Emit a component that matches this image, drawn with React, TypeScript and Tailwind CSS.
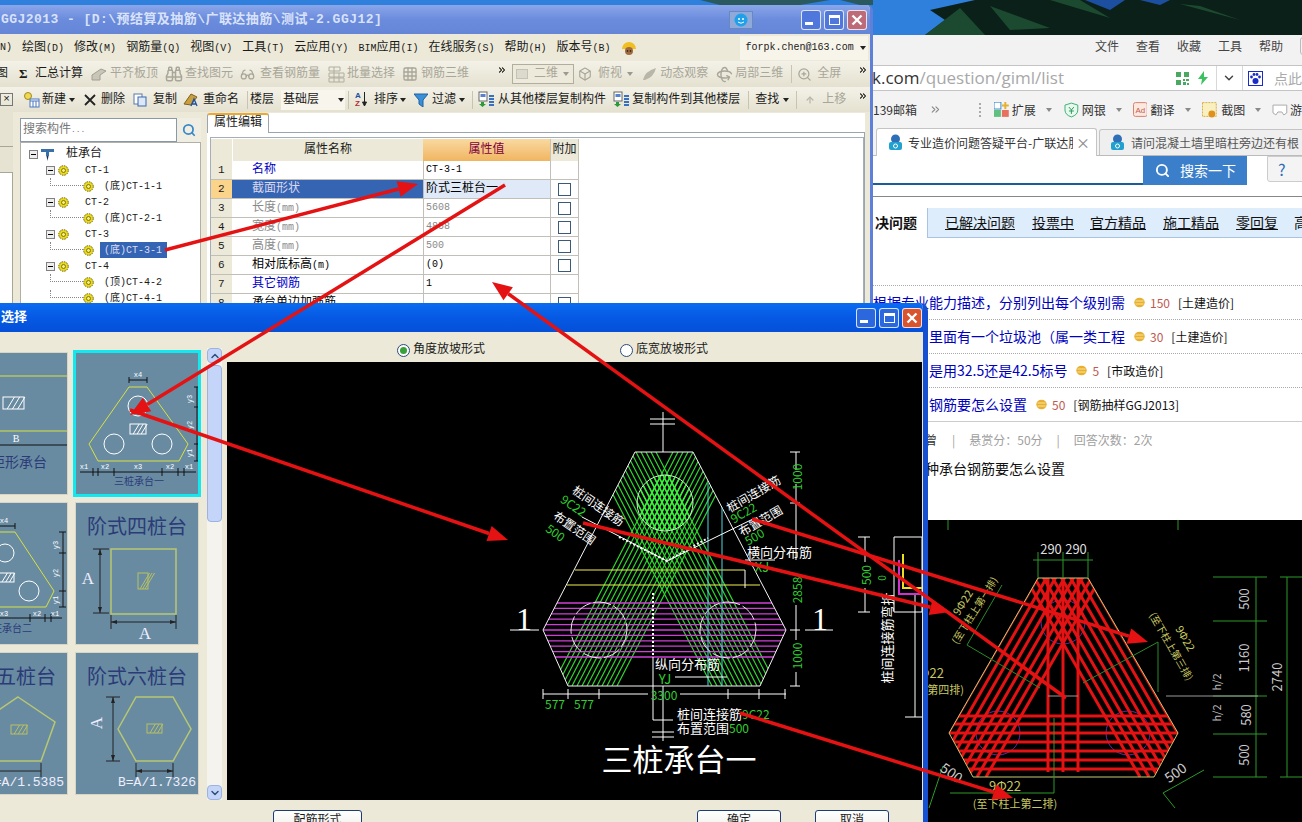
import { ReactNode } from "react";
import { ChevronDown, ChevronUp, Search, Binoculars, Glasses, Grid3x3, Box, Rotate3d, ZoomIn, ArrowUp, ChevronsRight } from "lucide-react";

const GREEN = "#2fd02f";
const CJK = "'Noto Sans CJK SC', sans-serif";

//-- Small bits shared by the toolbars
function Caret({ className = "" }: { className?: string }) {
  return (
    <svg width="6" height="4" viewBox="0 0 6 4" className={`shrink-0 ${className}`}>
      <path d="M0 0h6L3 4z" fill="#222" />
    </svg>
  );
}

function Sep({ className = "" }: { className?: string }) {
  return <span className={`w-px h-[18px] bg-[#c8c4b0] ${className}`} />;
}

function Mn({ label, k }: { label: string; k: string }) {
  return (
    <span className="whitespace-nowrap">
      {label}
      <span className="text-[10px]">({k})</span>
    </span>
  );
}

function More({ className = "" }: { className?: string }) {
  return <ChevronsRight size={10} strokeWidth={2.5} className={`text-black -translate-y-1 ${className}`} />;
}

function Gear({ className = "" }: { className?: string }) {
  return (
    <svg width="11" height="11" viewBox="0 0 11 11" className={`shrink-0 ${className}`}>
      <circle cx="5.5" cy="5.5" r="4.8" fill="#e8d820" stroke="#6a6010" strokeWidth="1" strokeDasharray="1.5 1" />
      <circle cx="5.5" cy="5.5" r="2" fill="#f6ee70" stroke="#6a6010" strokeWidth="0.8" />
    </svg>
  );
}

function Expander({ className = "" }: { className?: string }) {
  return (
    <span className={`w-[9px] h-[9px] border border-[#808080] bg-[#eee] flex items-center justify-center shrink-0 ${className}`}>
      <span className="w-[5px] h-px bg-black" />
    </span>
  );
}

function CopyFloorIcon({ className = "" }: { className?: string }) {
  return (
    <svg width="17" height="17" viewBox="0 0 17 17" className={className}>
      <rect x="1" y="1" width="8" height="9" fill="#fff" stroke="#666" />
      <rect x="2.5" y="3" width="5" height="3" fill="#5a80d0" />
      <path d="M3 11h3v2h2l-3.5 3-3.5-3h2z" fill="#2a9a3a" />
      <path d="M11 5h5M11 8h5M11 11h5M11 14h5" stroke="#3a70c0" strokeWidth="2" />
    </svg>
  );
}

function Coin() {
  return (
    <svg width="11" height="11" viewBox="0 0 11 11" className="shrink-0">
      <ellipse cx="5.5" cy="5.5" rx="5.2" ry="4.8" fill="#e8b030" />
      <path d="M1.5 4h8M1.5 7h8" stroke="#fbe49a" />
    </svg>
  );
}

function XpBtn({ kind, children, vivid }: { kind: string; children: ReactNode; vivid?: boolean }) {
  const bg =
    kind === "close"
      ? vivid
        ? "bg-[#d9532f]"
        : "bg-[#bd6b78]"
      : vivid
        ? "bg-[#2b68de]"
        : "bg-[#4f77dc]";
  return (
    <span className={`w-5 h-5 rounded-[3px] border border-white/80 flex items-center justify-center ${bg}`}>{children}</span>
  );
}

function WinButtons({ vivid }: { vivid?: boolean }) {
  return (
    <div className="flex gap-[3px]">
      <XpBtn kind="min" vivid={vivid}>
        <span className="w-[8px] h-[3px] bg-white mt-2 -ml-1" />
      </XpBtn>
      <XpBtn kind="max" vivid={vivid}>
        <span className="w-[11px] h-[10px] border border-white border-t-[3px]" />
      </XpBtn>
      <XpBtn kind="close" vivid={vivid}>
        <svg width="12" height="12" viewBox="0 0 12 12">
          <path d="M1.5 1.5l9 9M10.5 1.5l-9 9" stroke="#fff" strokeWidth="2.4" />
        </svg>
      </XpBtn>
    </div>
  );
}

//-- Property table data
const props = [
  { n: 1, name: "名称", unit: "", val: "CT-3-1", tone: "text-[#0000c8]", vTone: "text-black", box: false },
  { n: 2, name: "截面形状", unit: "", val: "阶式三桩台一", tone: "text-[#dcd8f0]", vTone: "text-black", box: true },
  { n: 3, name: "长度", unit: "(mm)", val: "5608", tone: "text-[#8a8a8a]", vTone: "text-[#8a8a8a]", box: true },
  { n: 4, name: "宽度", unit: "(mm)", val: "4858", tone: "text-[#8a8a8a]", vTone: "text-[#8a8a8a]", box: true },
  { n: 5, name: "高度", unit: "(mm)", val: "500", tone: "text-[#8a8a8a]", vTone: "text-[#8a8a8a]", box: true },
  { n: 6, name: "相对底标高", unit: "(m)", val: "(0)", tone: "text-black", vTone: "text-black", box: true },
  { n: 7, name: "其它钢筋", unit: "", val: "1", tone: "text-[#0000c8]", vTone: "text-black", box: false },
  { n: 8, name: "承台单边加强筋", unit: "", val: "", tone: "text-black", vTone: "text-black", box: true },
];

const tree = [
  { level: 1, label: "CT-1" },
  { level: 2, label: "(底)CT-1-1" },
  { level: 1, label: "CT-2" },
  { level: 2, label: "(底)CT-2-1" },
  { level: 1, label: "CT-3" },
  { level: 2, label: "(底)CT-3-1", active: true },
  { level: 1, label: "CT-4" },
  { level: 2, label: "(顶)CT-4-2" },
  { level: 2, label: "(底)CT-4-1" },
];

//-- The app window behind the dialog
function MainWindow() {
  return (
    <div className="absolute left-0 top-[5px] w-[873px] h-[320px] flex flex-col bg-[#ece9d8] border-r-[3px] border-[#5f80d8] rounded-tr-md overflow-hidden text-[12px] text-[#1a1a1a]">
      <div className="h-[29px] shrink-0 flex items-center bg-gradient-to-b from-[#8aa6ea] via-[#6b8bdc] to-[#6585d6]">
        <span className="font-bold text-[13px] text-[#d8e2fa] tracking-[0.45px] whitespace-nowrap w-[729px] pl-[1px]">
          GGJ2013 - [D:\预结算及抽筋\广联达抽筋\测试-2.GGJ12]
        </span>
        <span className="w-[24px] h-[18px] bg-[#8fa9d8] border border-[#6a88c0] flex items-center justify-center">
          <svg width="14" height="14" viewBox="0 0 14 14">
            <circle cx="7" cy="7" r="6.5" fill="#1fa0e8" />
            <circle cx="5" cy="6" r="1" fill="#fff" />
            <circle cx="9" cy="6" r="1" fill="#fff" />
            <path d="M4 9q3 2.5 6 0" stroke="#fff" fill="none" />
          </svg>
        </span>
        <span className="ml-[48px]">
          <WinButtons />
        </span>
      </div>

      {/* Menu */}
      <div className="h-[27px] shrink-0 flex items-center gap-[10px]">
        <span className="text-[10px] w-[12px] whitespace-nowrap">N)</span>
        <Mn label="绘图" k="D" />
        <Mn label="修改" k="M" />
        <Mn label="钢筋量" k="Q" />
        <Mn label="视图" k="V" />
        <Mn label="工具" k="T" />
        <Mn label="云应用" k="Y" />
        <span className="whitespace-nowrap">
          <span className="text-[10px]">BIM</span>应用<span className="text-[10px]">(I)</span>
        </span>
        <Mn label="在线服务" k="S" />
        <Mn label="帮助" k="H" />
        <Mn label="版本号" k="B" />
        <svg width="16" height="16" viewBox="0 0 16 16" className="shrink-0">
          <path d="M1 9a7 7 0 0 1 14 0z" fill="#f0c020" />
          <circle cx="8" cy="11" r="4" fill="#a06a40" />
          <circle cx="6.5" cy="11" r="0.8" fill="#111" />
          <circle cx="9.5" cy="11" r="0.8" fill="#111" />
        </svg>
        <div className="ml-[93px] w-[128px] h-[24px] bg-[#f7f5ea] flex items-center text-[10px] pl-[6px] gap-[6px] shrink-0">
          forpk.chen@163.com
          <Caret />
        </div>
      </div>

      {/* Toolbar 1 */}
      <div className="h-[26px] shrink-0 flex items-center bg-gradient-to-b from-[#f4f2e8] to-[#e4e1d0] whitespace-nowrap">
        <span className="-ml-[4px]">图</span>
        <span className="ml-[11px] w-[9px] font-bold text-[13px] font-['Liberation_Serif',serif]">Σ</span>
        <span className="ml-[7px]">汇总计算</span>
        <div className="flex items-center text-[#a8a698]">
          <svg width="18" height="16" viewBox="0 0 18 16" className="ml-[7px]">
            <path d="M2 14V9l9-6 5 2-6 4v5z" fill="#c8c6b8" stroke="#a0a090" />
          </svg>
          <span className="ml-[2px]">平齐板顶</span>
          <Binoculars size={18} className="ml-[7px]" />
          <span className="ml-[2px]">查找图元</span>
          <Glasses size={15} className="ml-[7px]" />
          <span className="ml-[5px]">查看钢筋量</span>
          <svg width="17" height="17" viewBox="0 0 17 17" className="ml-[8px]" stroke="#b0ae9e" fill="none">
            <path d="M1 1h11v4H1zM1 7h15v4H1zM1 12h15v4H1zM6 1v15M11 7v9" />
          </svg>
          <span className="ml-[2px]">批量选择</span>
          <Grid3x3 size={16} className="ml-[7px]" />
          <span className="ml-[3px]">钢筋三维</span>
        </div>
        <More className="ml-[28px]" />
        <div className="ml-[5px] w-[62px] h-[20px] border border-[#b0ae9e] bg-[#eeeadb] flex items-center text-[#a8a698] pl-[3px]">
          <span className="w-[12px] h-[10px] bg-[#dcdacc] border border-[#c4c2b4]" />
          <span className="ml-[6px]">二维</span>
          <Caret className="ml-[5px] opacity-40" />
        </div>
        <div className="flex items-center text-[#a8a698]">
          <Box size={14} className="ml-[4px]" />
          <span className="ml-[6px]">俯视</span>
          <Caret className="ml-[5px] opacity-40" />
          <svg width="16" height="16" viewBox="0 0 16 16" className="ml-[9px]">
            <path d="M1 14Q3 5 14 2q-2 9-11 12z" fill="#b8b6a8" />
          </svg>
          <span className="ml-[2px]">动态观察</span>
          <Rotate3d size={17} className="ml-[8px]" />
          <span className="ml-[2px]">局部三维</span>
          <Sep className="ml-[8px]" />
          <ZoomIn size={15} className="ml-[5px]" />
          <span className="ml-[5px]">全屏</span>
        </div>
        <More className="ml-[17px]" />
      </div>

      {/* Toolbar 2 */}
      <div className="h-[25px] shrink-0 flex items-center bg-gradient-to-b from-[#f4f2e8] to-[#e4e1d0] whitespace-nowrap">
        <span className="w-[13px] h-[13px] border border-[#777] flex items-center justify-center text-[11px] leading-none">×</span>
        <svg width="17" height="17" viewBox="0 0 17 17" className="ml-[10px]">
          <circle cx="5" cy="5" r="3.5" fill="#f0d850" stroke="#a08a20" />
          <rect x="7" y="8" width="9" height="8" fill="#fff" stroke="#4a78c0" />
          <path d="M7 10h9M10 10v6M13 10v6" stroke="#4a78c0" />
        </svg>
        <span className="ml-[2px]">新建</span>
        <Caret className="ml-[3px]" />
        <svg width="12" height="12" viewBox="0 0 12 12" className="ml-[9px]">
          <path d="M1 1l10 10M11 1L1 11" stroke="#222" strokeWidth="1.8" />
        </svg>
        <span className="ml-[5px]">删除</span>
        <svg width="14" height="14" viewBox="0 0 14 14" className="ml-[8px]">
          <rect x="1" y="1" width="8" height="10" fill="#fff" stroke="#5a78a8" />
          <rect x="5" y="4" width="8" height="9" fill="#dce8f8" stroke="#3a68b0" />
        </svg>
        <span className="ml-[6px]">复制</span>
        <svg width="15" height="15" viewBox="0 0 15 15" className="ml-[6px]">
          <path d="M1 12 8 2l6 3-6 8z" fill="#c8a040" stroke="#806020" />
          <path d="M8 14l3-7 3 7M9 12h4" stroke="#2050a0" fill="none" strokeWidth="1.3" />
        </svg>
        <span className="ml-[5px]">重命名</span>
        <Sep className="ml-[8px]" />
        <span className="ml-[2px]">楼层</span>
        <div className="ml-[7px] w-[64px] h-[20px] bg-[#f7f5ec] flex items-center pl-[2px]">
          基础层
          <Caret className="ml-[19px]" />
        </div>
        <Sep className="ml-[3px]" />
        <svg width="12" height="17" viewBox="0 0 12 17" className="ml-[6px]">
          <text x="0" y="7" fontSize="8" fontWeight="700" fill="#2050a0" fontFamily="'Liberation Sans', sans-serif">A</text>
          <text x="0" y="15" fontSize="8" fontWeight="700" fill="#b03030" fontFamily="'Liberation Sans', sans-serif">Z</text>
          <path d="M9.5 1v13M7.5 11l2 4 2-4z" stroke="#222" fill="#222" />
        </svg>
        <span className="ml-[7px]">排序</span>
        <Caret className="ml-[2px]" />
        <svg width="14" height="14" viewBox="0 0 14 14" className="ml-[8px]">
          <path d="M0 1h14L9 7v7L5 11V7z" fill="#3a90d8" stroke="#2060a0" />
        </svg>
        <span className="ml-[4px]">过滤</span>
        <Caret className="ml-[3px]" />
        <Sep className="ml-[7px]" />
        <CopyFloorIcon className="ml-[5px]" />
        <span className="ml-[3px]">从其他楼层复制构件</span>
        <CopyFloorIcon className="ml-[7px]" />
        <span className="ml-[2px]">复制构件到其他楼层</span>
        <Sep className="ml-[8px]" />
        <span className="ml-[6px]">查找</span>
        <Caret className="ml-[4px]" />
        <Sep className="ml-[7px]" />
        <ArrowUp size={10} strokeWidth={3} className="ml-[8px] text-[#b8b6a8]" />
        <span className="ml-[7px] text-[#a8a698]">上移</span>
        <More className="ml-[12px]" />
      </div>

      {/* Work area */}
      <div className="flex-1 flex min-h-0">
        <div className="w-[13px] shrink-0 flex flex-col">
          <div className="h-[36px] bg-[#e6e3d2] border-b border-[#a8a694] mt-[-1px]" />
          <div className="h-[26px] bg-[#e6e3d2] border-b border-[#a8a694]" />
          <div className="flex-1 bg-white border-r border-[#a8a694]" />
        </div>
        <div className="w-[7px] shrink-0" />
        <div className="w-[181px] shrink-0 flex flex-col pt-[6px]">
          <div className="flex h-[24px] shrink-0">
            <div className="w-[157px] bg-white border border-[#8a98a8] text-[#777] pl-[2px] flex items-center">
              搜索构件<span className="text-[8px]">...</span>
            </div>
            <div className="w-[24px] flex items-center justify-center bg-[#f0eee2]">
              <Search size={14} strokeWidth={3} className="text-[#3a88c8]" />
            </div>
          </div>
          <div className="flex-1 bg-white border border-[#b0b0a8] pt-[3px] pl-[7px] overflow-hidden">
            <div className="h-4 flex items-center">
              <Expander className="ml-[1px]" />
              <svg width="15" height="14" viewBox="0 0 15 14" className="ml-[2px]">
                <path d="M1 2h13v3H9v4H6V5H1z" fill="#3a70a8" />
                <path d="M6.5 9h2L7.5 14z" fill="#14305a" />
              </svg>
              <span className="ml-[11px]">桩承台</span>
            </div>
            {tree.map((t) =>
              t.level === 1 ? (
                <div key={t.label} className="h-4 flex items-center pl-[18px]">
                  <Expander />
                  <Gear className="ml-[3px]" />
                  <span className="ml-[16px] text-[10px]">{t.label}</span>
                </div>
              ) : (
                <div key={t.label} className="h-4 flex items-center pl-[22px] text-[10px]">
                  <span className="w-[33px] h-[8px] self-start border-l border-b border-dotted border-[#888] shrink-0" />
                  <Gear />
                  <span className={`ml-[6px] h-4 flex items-center whitespace-nowrap px-[4px] w-[67px] ${t.active ? "bg-[#3464b4] text-[#dcdcf0]" : ""}`}>
                    {t.label}
                  </span>
                </div>
              )
            )}
          </div>
        </div>
        <div className="w-[6px] shrink-0" />
        <div className="flex-1 flex flex-col pt-[1px]">
          <div className="h-[20px] flex shrink-0">
            <div className="w-[62px] bg-white border border-[#9aa5b0] border-b-0 border-t-2 border-t-[#eda830] rounded-t-[3px] pl-[6px] leading-[17px]">属性编辑</div>
            <div className="flex-1 bg-white border-b border-[#9aa5b0] mr-[5px]" />
          </div>
          <div className="flex-1 bg-white border-r border-[#9aa5b0] mr-[5px] pl-[3px] pt-[4px]">
            <div className="border border-[#a4afba] h-full pt-[1px]">
              <div className="grid grid-cols-[21px_191px_127px_29px] grid-rows-[22px_repeat(8,19px)] w-[368px]">
                <div className="bg-[#ece9d8]" />
                <div className="bg-[#ece9d8] border-l border-white text-center leading-[22px]">属性名称</div>
                <div className="bg-gradient-to-b from-[#f9d9a0] to-[#f0b560] text-center leading-[22px] text-[#800040]">属性值</div>
                <div className="bg-[#ece9d8] border-x border-[#c8c4b0] text-center leading-[22px]">附加</div>
                {props.map((p) => (
                  <div key={p.n} className="contents">
                    <div className={`border-b border-[#c0c0b8] pl-[7px] text-[11px] leading-[18px] ${p.n === 2 ? "bg-[#fbd48c]" : "bg-[#ece9d8]"}`}>
                      {p.n}
                    </div>
                    <div className={`border-b border-[#c0c0b8] pl-[20px] leading-[18px] ${p.tone} ${p.n === 2 ? "bg-[#3565b2]" : ""}`}>
                      {p.name}
                      {p.unit && <span className="text-[10px]">{p.unit}</span>}
                    </div>
                    <div className={`border-b border-l border-[#c0c0b8] pl-[2px] leading-[18px] ${p.n === 2 ? "text-[12px] bg-[#dfe9f7]" : "text-[10px]"} ${p.vTone}`}>
                      {p.val}
                    </div>
                    <div className="border-b border-x border-[#c0c0b8] flex items-center justify-center">
                      {p.box && <span className="w-[13px] h-[13px] border border-[#3a5a78] bg-white" />}
                    </div>
                  </div>
                ))}
              </div>
            </div>
          </div>
        </div>
      </div>
    </div>
  );
}

//-- Thumbnails of the cap shapes
const TILE_YELLOW = "#d8e040";
const TILE_DIM = "#b8c870";

function Hatch({ x, y, w, h, color = "#fff" }: { x: number; y: number; w: number; h: number; color?: string }) {
  return (
    <g>
      <rect x={x} y={y} width={w} height={h} fill="none" stroke={color} />
      {[0.2, 0.45, 0.7].map((f) => (
        <line key={f} x1={x + w * f} y1={y + h} x2={x + w * f + h * 0.6} y2={y} stroke={color} />
      ))}
    </g>
  );
}

function DimLabel({ x, y, t, r }: { x: number; y: number; t: string; r?: boolean }) {
  return (
    <text x={x} y={y} fontSize="7" fill="#fff" textAnchor="middle" fontFamily="'Liberation Mono', monospace" transform={r ? `rotate(-90 ${x} ${y})` : undefined}>
      {t}
    </text>
  );
}

function Title({ t }: { t: string }) {
  return (
    <text x="61" y="31" fontSize="20" textAnchor="middle" fill="#2b3b78" fontFamily={CJK}>
      {t}
    </text>
  );
}

function Tile({ selected, children }: { selected?: boolean; children: ReactNode }) {
  return (
    <div className={`relative w-[122px] h-[141px] bg-[#698ba2] ${selected ? "outline-[3px] outline-[#12e8f0]" : "outline outline-[#d8d5c4]"}`}>
      <svg width="122" height="141" viewBox="0 0 122 141" className="block">
        {children}
      </svg>
    </div>
  );
}

function ShapePanel() {
  return (
    <div className="w-[225px] shrink-0 flex flex-col overflow-hidden">
      <div className="flex mt-[16px] h-[452px]">
        <div className="w-[207px] overflow-hidden pt-[5px]">
          <div className="grid grid-cols-[122px_122px] gap-x-[9px] gap-y-[9px] -ml-[55px] w-[253px]">
            <Tile>
              <line x1="0" y1="23" x2="122" y2="23" stroke={TILE_YELLOW} />
              <line x1="0" y1="78" x2="122" y2="78" stroke={TILE_YELLOW} />
              <Hatch x={58} y={44} w={21} h={12} />
              <line x1="0" y1="92" x2="122" y2="92" stroke="#111" />
              <text x="71" y="89" fontSize="10" textAnchor="middle" fill="#fff" fontFamily="'Liberation Serif', serif">B</text>
              <text x="102" y="114" fontSize="14" textAnchor="end" fill="#2b3b78" fontFamily={CJK}>矩形承台</text>
            </Tile>
            <Tile selected>
              <polygon points="53,34 71,34 112,91 103,108 22,108 13,91" fill="none" stroke={TILE_YELLOW} />
              <circle cx="62" cy="53" r="10" fill="none" stroke="#fff" />
              <circle cx="38" cy="91" r="10" fill="none" stroke="#fff" />
              <circle cx="86" cy="91" r="10" fill="none" stroke="#fff" />
              <Hatch x={54} y={71} w={16} h={10} />
              <path d="M53 27h18M53 24v6M71 24v6M121 34v74M118 34h6M118 54h6M118 91h6M118 108h6M4 119h116M17 115v8M22 115v8M38 115v8M86 115v8M102 115v8M108 115v8" stroke="#111" fill="none" />
              <DimLabel x={62} y={24} t="x4" />
              <DimLabel x={116} y={46} t="y3" r />
              <DimLabel x={116} y={72} t="y2" r />
              <DimLabel x={116} y={100} t="y1" r />
              <DimLabel x={8} y={116} t="x1" />
              <DimLabel x={29} y={116} t="x2" />
              <DimLabel x={62} y={116} t="x3" />
              <DimLabel x={94} y={116} t="x2" />
              <DimLabel x={113} y={116} t="x1" />
              <text x="63" y="132" fontSize="10" textAnchor="middle" fill="#2b3b78" fontFamily={CJK}>三桩承台一</text>
            </Tile>
            <Tile>
              <polygon points="52,29 70,29 109,88 101,104 21,104 12,88" fill="none" stroke={TILE_YELLOW} />
              <circle cx="60" cy="50" r="9" fill="none" stroke="#fff" />
              <circle cx="84" cy="88" r="10" fill="none" stroke="#fff" />
              <Hatch x={54} y={70} w={15} h={9} />
              <path d="M52 23h18M70 20v6M118 29v75M114 29h7M114 50h7M114 88h7M114 104h7M0 115h117M85 111v8M100 111v8M106 111v8" stroke="#111" fill="none" />
              <DimLabel x={59} y={20} t="x4" />
              <DimLabel x={113} y={42} t="y3" r />
              <DimLabel x={113} y={70} t="y2" r />
              <DimLabel x={113} y={97} t="y1" r />
              <DimLabel x={59} y={113} t="x3" />
              <DimLabel x={92} y={113} t="x2" />
              <DimLabel x={110} y={113} t="x1" />
              <text x="87" y="129" fontSize="10" textAnchor="end" fill="#2b3b78" fontFamily={CJK}>三桩承台二</text>
            </Tile>
            <Tile>
              <Title t="阶式四桩台" />
              <rect x="35" y="46" width="65" height="65" fill="none" stroke={TILE_DIM} strokeWidth="1.5" />
              <Hatch x={62} y={70} w={10} h={16} color="#b8c060" />
              <path d="M24 46v64M17 46h16M17 110h16M35 119h65M35 112v14M100 112v14" stroke="#222" fill="none" />
              <path d="M24 46l-2 6h4zM24 110l-2-6h4zM35 119l6-2v4zM100 119l-6-2v4z" fill="#222" />
              <text x="12" y="81" fontSize="17" textAnchor="middle" fill="#eef" fontFamily="'Liberation Serif', serif">A</text>
              <text x="69" y="136" fontSize="17" textAnchor="middle" fill="#eef" fontFamily="'Liberation Serif', serif">A</text>
            </Tile>
            <Tile>
              <Title t="阶式五桩台" />
              <polygon points="73,44 110,69 96,108 50,108 36,69" fill="none" stroke={TILE_DIM} strokeWidth="1.5" />
              <Hatch x={66} y={72} w={16} h={9} color="#b8c060" />
              <path d="M50 118h46M96 110v14" stroke="#222" fill="none" />
              <text x="119" y="133" fontSize="13" textAnchor="end" fill="#eef" fontFamily="'Liberation Mono', monospace">B=A/1.5385</text>
            </Tile>
            <Tile>
              <Title t="阶式六桩台" />
              <polygon points="42,76 60,44 97,44 115,76 97,108 60,108" fill="none" stroke={TILE_DIM} strokeWidth="1.5" />
              <Hatch x={71} y={71} w={15} h={9} color="#b8c060" />
              <path d="M37 44v64M30 44h14M30 108h14M60 118h37M60 110v14M97 110v14" stroke="#222" fill="none" />
              <path d="M37 44l-2 6h4zM37 108l-2-6h4zM60 118l6-2v4zM97 118l-6-2v4z" fill="#222" />
              <text x="21" y="75" fontSize="17" textAnchor="middle" fill="#eef" transform="rotate(-90 21 70)" fontFamily="'Liberation Serif', serif">A</text>
              <text x="81" y="133" fontSize="13" textAnchor="middle" fill="#eef" fontFamily="'Liberation Mono', monospace">B=A/1.7326</text>
            </Tile>
          </div>
        </div>
        <div className="w-[15px] flex flex-col bg-[#f4f3ee]">
          <div className="h-[15px] bg-[#c5d5fa] border border-[#9db2e0] rounded-sm flex items-center justify-center">
            <ChevronUp size={12} strokeWidth={3} className="text-[#30507a]" />
          </div>
          <div className="h-[157px] mt-[2px] bg-[#c5d5fa] border border-[#9db2e0] rounded-sm" />
          <div className="flex-1" />
          <div className="h-[15px] bg-[#c5d5fa] border border-[#9db2e0] rounded-sm flex items-center justify-center">
            <ChevronDown size={12} strokeWidth={3} className="text-[#30507a]" />
          </div>
        </div>
      </div>
    </div>
  );
}

//-- CAD drawing inside the dialog, viewBox uses screen coordinates
function Cad({ x, y, t, size = 13, fill = "#fff", rot, anchor = "middle" }: { x: number; y: number; t: string; size?: number; fill?: string; rot?: number; anchor?: "middle" | "start" | "end" }) {
  return (
    <text x={x} y={y} fontSize={size} fill={fill} textAnchor={anchor} dominantBaseline="central" fontFamily={CJK} transform={rot !== undefined ? `rotate(${rot} ${x} ${y})` : undefined}>
      {t}
    </text>
  );
}

const hatchStarts = Array.from({ length: 14 }, (_, i) => 552 + i * 5);
const purpleYs = Array.from({ length: 11 }, (_, i) => 603 + i * 5.4);

function DialogCad() {
  const mirror = (x: number) => 1329 - x;
  return (
    <svg viewBox="227 362 695 438" className="block w-[695px] h-[438px] bg-black">
      <defs>
        <clipPath id="capA">
          <polygon points="635,452 693,452 786,630 760,686 568,686 543,630" />
        </clipPath>
        <clipPath id="pileTop">
          <circle cx="665" cy="503" r="28" />
        </clipPath>
      </defs>
      <g clipPath="url(#capA)" stroke="#2ed82e" strokeWidth="1.2">
        {hatchStarts.map((x) => (
          <g key={x}>
            <line x1={x} y1="686" x2={x + 121} y2="452" />
            <line x1={mirror(x)} y1="686" x2={mirror(x) - 121} y2="452" />
          </g>
        ))}
      </g>
      <g clipPath="url(#pileTop)" stroke="#3cf03c" strokeWidth="1.5">
        {hatchStarts.map((x) => (
          <g key={x}>
            <line x1={x} y1="686" x2={x + 121} y2="452" />
            <line x1={mirror(x)} y1="686" x2={mirror(x) - 121} y2="452" />
          </g>
        ))}
      </g>
      <g clipPath="url(#capA)" stroke="#d040d8" strokeWidth="1.3">
        {purpleYs.map((y) => (
          <line key={y} x1="540" y1={y} x2="790" y2={y} />
        ))}
      </g>
      <polygon points="635,452 693,452 786,630 760,686 568,686 543,630" fill="none" stroke="#f4f4f4" />
      <circle cx="665" cy="503" r="28" fill="none" stroke="#c8f0c8" />
      <circle cx="599" cy="630" r="28" fill="none" stroke="#e8e8e8" strokeDasharray="18 3" />
      <circle cx="728" cy="630" r="28" fill="none" stroke="#e8e8e8" strokeDasharray="18 3" />
      <path d="M575 570H745M567 585H760" stroke="#f0f050" strokeWidth="1.2" />
      <path d="M708 483V686M722 507V686" stroke="#50d8e0" />
      <path d="M582 517L667 561L755 518" stroke="#fff" fill="none" />
      <path d="M619 537L667 561L708 538" stroke="#fff" fill="none" strokeWidth="2" strokeDasharray="2 2" />
      <path d="M653 593V657" stroke="#fff" strokeWidth="2" strokeDasharray="2 2" />
      <path d="M653 657V720H673M663 412V452M650 419H675M650 424H675M663 686V741M652 732H674M652 737H674" stroke="#fff" fill="none" />
      <path d="M796 452V470M796 484V560M796 605V640M796 672V686M790 452H800M790 503H800M790 630H800M790 686H800" stroke="#fff" fill="none" />
      <path d="M510 630H539M805 630H833" stroke="#fff" />
      <path d="M543 694H648M680 694H786M543 689V699M568 689V699M599 689V699M728 689V699M759 689V699M785 689V699" stroke="#fff" fill="none" />
      <path d="M675 677H727M745 560H775M745 570V588" stroke="#fff" fill="none" />

      <Cad x={796} y={477} t="1000" rot={-90} fill={GREEN} size={12} />
      <Cad x={796} y={590} t="2858" rot={-90} fill={GREEN} size={12} />
      <Cad x={796} y={656} t="1000" rot={-90} fill={GREEN} size={12} />
      <text x="524" y="630" fontSize="32" textAnchor="middle" fill="#fff" fontFamily="'Liberation Serif', serif">1</text>
      <text x="820" y="630" fontSize="32" textAnchor="middle" fill="#fff" fontFamily="'Liberation Serif', serif">1</text>
      <Cad x={555} y={703} t="577" fill={GREEN} size={12} />
      <Cad x={584} y={703} t="577" fill={GREEN} size={12} />
      <Cad x={664} y={694} t="3300" fill={GREEN} size={12} />
      <Cad x={655} y={663} t="纵向分布筋" anchor="start" />
      <Cad x={665} y={678} t="YJ" fill={GREEN} />
      <Cad x={747} y={551} t="横向分布筋" anchor="start" />
      <Cad x={762} y={566} t="XJ" fill={GREEN} />
      <Cad x={677} y={713} t="桩间连接筋" anchor="start" size={13} />
      <Cad x={742} y={713} t="9C22" anchor="start" fill={GREEN} size={12} />
      <Cad x={677} y={727} t="布置范围" anchor="start" size={13} />
      <Cad x={729} y={727} t="500" anchor="start" fill={GREEN} size={12} />
      <Cad x={679} y={757} t="三桩承台一" size={31} />
      <Cad x={599} y={505} t="桩间连接筋" rot={35} size={12} />
      <Cad x={574} y={505} t="9C22" rot={35} fill={GREEN} size={12} />
      <Cad x={575} y={527} t="布置范围" rot={35} size={12} />
      <Cad x={556} y={532} t="500" rot={35} fill={GREEN} size={12} />
      <Cad x={753} y={493} t="桩间连接筋" rot={-30} size={12} />
      <Cad x={743} y={512} t="9C22" rot={-30} fill={GREEN} size={12} />
      <Cad x={760} y={520} t="布置范围" rot={-30} size={12} />
      <Cad x={754} y={536} t="500" rot={-30} fill={GREEN} size={12} />

      <path d="M865 537V612M858 537H870M858 612H870M894 537H922V612H894Z" stroke="#fff" fill="none" />
      <path d="M903 554V588H922" stroke="#e8e020" strokeWidth="2" fill="none" />
      <path d="M899 560V594H922" stroke="#d030d0" strokeWidth="2" fill="none" />
      <path d="M915 595V717M905 717H922" stroke="#fff" fill="none" />
      <rect x="857" y="562" width="16" height="26" fill="#000" />
      <Cad x={865} y={575} t="500" rot={-90} fill={GREEN} size={12} />
      <Cad x={881} y={578} t="0" rot={-90} fill={GREEN} size={10} />
      <Cad x={886} y={638} t="桩间连接筋弯折" rot={-90} size={13} />
    </svg>
  );
}

function Radio({ on, label }: { on?: boolean; label: string }) {
  return (
    <span className="flex items-center gap-[3px]">
      <span className="w-[13px] h-[13px] rounded-full border border-[#2a4a7a] bg-white flex items-center justify-center">
        {on && <span className="w-[7px] h-[7px] rounded-full bg-[#3aa03a]" />}
      </span>
      {label}
    </span>
  );
}

function DlgButton({ label, className }: { label: string; className: string }) {
  return (
    <div className={`h-[24px] bg-gradient-to-b from-white to-[#ecebe4] border border-[#1c3c78] rounded-[3px] text-center leading-[20px] ${className}`}>{label}</div>
  );
}

//-- Selection dialog in front of the app window
function Dialog() {
  return (
    <div className="absolute left-0 top-[303px] w-[928px] h-[530px] flex flex-col bg-[#ece9d8] border-r-[5px] border-[#1550d2] rounded-tr-lg overflow-hidden text-[12px] text-[#1a1a1a]">
      <div className="h-[29px] shrink-0 flex items-center bg-gradient-to-b from-[#0b6cf0] via-[#0659e4] to-[#0550d8]">
        <span className="font-bold text-[13px] text-white w-[856px] pl-[1px]">选择</span>
        <WinButtons vivid />
      </div>
      <div className="flex h-[468px] shrink-0">
        <ShapePanel />
        <div className="flex-1 flex flex-col pl-[2px]">
          <div className="h-[30px] flex items-center pt-[6px]">
            <span className="ml-[170px]">
              <Radio on label="角度放坡形式" />
            </span>
            <span className="ml-[135px]">
              <Radio label="底宽放坡形式" />
            </span>
          </div>
          <DialogCad />
        </div>
      </div>
      <div className="flex pt-[10px]">
        <DlgButton label="配筋形式" className="ml-[273px] w-[89px]" />
        <DlgButton label="确定" className="ml-[335px] w-[84px]" />
        <DlgButton label="取消" className="ml-[34px] w-[74px]" />
      </div>
    </div>
  );
}

//-- Drawing in the browser page behind the dialog
const redStarts = Array.from({ length: 9 }, (_, i) => 986 - i * 9);
const redYs = [716, 724, 733, 742, 751, 760, 769];

function RebarCad() {
  const mirror = (x: number) => 2126 - x;
  return (
    <svg viewBox="873 520 429 302" className="block w-[429px] h-[302px] bg-black shrink-0">
      <defs>
        <clipPath id="capB">
          <polygon points="1038,578 1088,578 1178,733 1154,777 973,777 949,733" />
        </clipPath>
      </defs>
      <circle cx="1063" cy="622" r="22" fill="none" stroke="#6030a8" />
      <circle cx="998" cy="733" r="22" fill="none" stroke="#6030a8" />
      <circle cx="1128" cy="733" r="22" fill="none" stroke="#6030a8" />
      <g clipPath="url(#capB)" stroke="#e41212" strokeWidth="3">
        {redStarts.map((x) => (
          <g key={x}>
            <line x1={x} y1="777" x2={x + 115} y2="577" />
            <line x1={mirror(x)} y1="777" x2={mirror(x) - 115} y2="577" />
          </g>
        ))}
        {redYs.map((y) => (
          <line key={y} x1="940" y1={y} x2="1190" y2={y} />
        ))}
        <path d="M1048 578V772M1063 578V772M1078 578V772" />
      </g>
      <polygon points="1038,578 1088,578 1178,733 1154,777 973,777 949,733" fill="none" stroke="#c8c870" />
      <path d="M1038 578V552M1063 578V552M1088 578V552M1033 560H1093M948 520V530M1178 520V530" stroke="#2a9a2a" fill="none" />
      <path d="M1213 577H1267M1213 621H1267M1213 696H1267M1213 734H1267M1213 777H1267M1256 577V777M1287 577V777M1280 577H1302M1280 777H1302" stroke="#2a9a2a" fill="none" />
      <path d="M1002 585L967 645L1040 688M1158 692L1158 642L1083 683" stroke="#2a8a2a" fill="none" />
      <path d="M1166 696H1258M1048 696H1078" stroke="#999" fill="none" />
      <path d="M1054 718V793H950M943 766L929 808M1204 770L1163 793L1175 808" stroke="#2a9a2a" fill="none" />
      <Cad x={1051} y={548} t="290" fill="#ddd" size={13} />
      <Cad x={1076} y={548} t="290" fill="#ddd" size={13} />
      <Cad x={1243} y={599} t="500" fill="#ccc" rot={-90} size={13} />
      <Cad x={1243} y={658} t="1160" fill="#ccc" rot={-90} size={13} />
      <Cad x={1245} y={715} t="580" fill="#ccc" rot={-90} size={13} />
      <Cad x={1243} y={755} t="500" fill="#ccc" rot={-90} size={13} />
      <Cad x={1276} y={677} t="2740" fill="#ccc" rot={-90} size={13} />
      <Cad x={1216} y={682} t="h/2" fill="#bbb" rot={-90} size={11} />
      <Cad x={1216} y={713} t="h/2" fill="#bbb" rot={-90} size={11} />
      <Cad x={952} y={772} t="500" fill="#ccc" rot={35} size={14} />
      <Cad x={1175} y={772} t="500" fill="#ccc" rot={-35} size={14} />
      <Cad x={962} y={602} t="9Φ22" fill="#c8c860" rot={-58} size={11} />
      <Cad x={974} y={610} t="(至下柱上第一排)" fill="#c8c860" rot={-58} size={10} />
      <Cad x={1186} y={638} t="9Φ22" fill="#c8c860" rot={60} size={11} />
      <Cad x={1172} y={646} t="(至下柱上第三排)" fill="#c8c860" rot={60} size={10} />
      <Cad x={944} y={672} t="9Φ22" fill="#c8c860" anchor="end" size={13} />
      <Cad x={964} y={689} t="(至下柱上第四排)" fill="#c8c860" anchor="end" size={11} />
      <Cad x={1005} y={785} t="9Φ22" fill="#c8c860" size={13} />
      <Cad x={1015} y={803} t="(至下柱上第二排)" fill="#c8c860" size={11} />
    </svg>
  );
}

const questions = [
  { pad: "", title: "根据专业能力描述，分别列出每个级别需", score: "150", tag: "[土建造价]" },
  { pad: "pl-[56px]", title: "里面有一个垃圾池（属一类工程", score: "30", tag: "[土建造价]" },
  { pad: "pl-[56px]", title: "是用32.5还是42.5标号", score: "5", tag: "[市政造价]" },
  { pad: "pl-[56px]", title: "钢筋要怎么设置", score: "50", tag: "[钢筋抽样GGJ2013]" },
];

function TabLogo() {
  return (
    <svg width="15" height="17" viewBox="0 0 15 17" className="shrink-0">
      <circle cx="7.5" cy="5" r="4.5" fill="#2f6fb8" />
      <rect x="1" y="8" width="13" height="8" rx="2" fill="#22a0d0" />
      <circle cx="7.5" cy="12" r="2" fill="none" stroke="#fff" />
    </svg>
  );
}

function BrowserWindow() {
  return (
    <div className="absolute left-[873px] top-[35px] w-[429px] h-[787px] flex flex-col bg-white text-[12px] overflow-hidden font-['Noto_Sans_CJK_SC',sans-serif]">
      <div className="h-[31px] shrink-0 bg-[#f2f2f2] border-b border-[#c4c4c4] flex items-center text-[#444] gap-[17px] pl-[207px] pb-[8px] whitespace-nowrap">
        <svg width="6" height="10" viewBox="0 0 6 10" className="-mr-[2px]">
          <path d="M1 1l4 4-4 4" stroke="#888" fill="none" />
        </svg>
        <span>文件</span>
        <span>查看</span>
        <span>收藏</span>
        <span>工具</span>
        <span>帮助</span>
        <span className="w-[20px] h-[18px] border border-[#bbb] rounded-l-[3px] shrink-0" />
      </div>
      <div className="h-[25px] shrink-0 flex items-center border-b border-[#c4c4c4] whitespace-nowrap">
        <span className="w-[304px] text-[17px] font-['Open_Sans',sans-serif] text-[#333] -ml-[1px] shrink-0">
          k.com<span className="text-[#a8a8a8]">/question/giml/list</span>
        </span>
        <svg width="13" height="13" viewBox="0 0 13 13" className="shrink-0">
          <path d="M0 0h5v5H0zM8 0h5v5H8zM0 8h5v5H0zM7 7h2v2H7zM10 7h3v2h-3zM7 10h3v3H7zM11 11h2v2h-2z" fill="#4aa860" />
        </svg>
        <svg width="12" height="14" viewBox="0 0 12 14" className="ml-[8px] shrink-0">
          <path d="M7 0L1 8h4l-1 6 7-8H7z" fill="#3cc060" />
        </svg>
        <span className="w-px h-full bg-[#d8d8d8] ml-[7px]" />
        <ChevronDown size={14} strokeWidth={2.5} className="ml-[5px] text-[#444] shrink-0" />
        <span className="w-px h-full bg-[#d8d8d8] ml-[6px]" />
        <svg width="15" height="15" viewBox="0 0 15 15" className="ml-[5px] shrink-0">
          <rect width="15" height="15" fill="#1a2bc8" />
          <rect x="1" y="1" width="13" height="13" fill="#fff" />
          <circle cx="7.5" cy="10" r="3" fill="#1a2bc8" />
          <circle cx="3.5" cy="6" r="1.4" fill="#1a2bc8" />
          <circle cx="6" cy="3.5" r="1.4" fill="#1a2bc8" />
          <circle cx="9" cy="3.5" r="1.4" fill="#1a2bc8" />
          <circle cx="11.5" cy="6" r="1.4" fill="#1a2bc8" />
        </svg>
        <span className="ml-[11px] text-[14px] text-[#aaa]">点此</span>
      </div>
      <div className="h-[37px] shrink-0 bg-[#f3f3f3] flex items-center whitespace-nowrap text-[#333]">
        <span className="w-[45px]">139邮箱</span>
        <ChevronsRight size={13} className="ml-[12px] text-[#888]" />
        <span className="ml-[37px] w-[3px] h-[14px] border-l-2 border-dotted border-[#aaa]" />
        <svg width="15" height="15" viewBox="0 0 15 15" className="ml-[12px]">
          <rect x="0" y="0" width="7" height="7" fill="#fff" stroke="#3a8ad0" />
          <rect x="0" y="8" width="7" height="7" fill="#60c080" />
          <rect x="8" y="8" width="7" height="7" fill="#e87060" />
          <path d="M11.5 0v7M8 3.5h7" stroke="#e8b030" strokeWidth="2" />
        </svg>
        <span className="ml-[3px]">扩展</span>
        <Caret className="ml-[10px] opacity-50" />
        <svg width="15" height="16" viewBox="0 0 15 16" className="ml-[12px]">
          <path d="M7.5 1L14 3v5q0 5-6.5 7Q1 13 1 8V3z" fill="#e8f8ee" stroke="#3cb070" />
          <path d="M5 5l2.5 3L10 5M5 9h5M7.5 8v4" stroke="#2a9a60" fill="none" />
        </svg>
        <span className="ml-[3px]">网银</span>
        <Caret className="ml-[10px] opacity-50" />
        <svg width="15" height="15" viewBox="0 0 15 15" className="ml-[11px]">
          <rect x="0.5" y="0.5" width="14" height="14" rx="2" fill="#fde8e0" stroke="#d88070" />
          <text x="7.5" y="11" fontSize="8" textAnchor="middle" fill="#c05a50" fontFamily="'Liberation Sans', sans-serif">Ad</text>
        </svg>
        <span className="ml-[3px]">翻译</span>
        <Caret className="ml-[11px] opacity-50" />
        <svg width="15" height="16" viewBox="0 0 15 16" className="ml-[11px]">
          <rect x="0.5" y="0.5" width="14" height="14" fill="#f8f0c0" stroke="#d8b040" strokeDasharray="2 1" />
          <circle cx="10" cy="12" r="3.5" fill="#e0901c" />
        </svg>
        <span className="ml-[4px]">截图</span>
        <Caret className="ml-[10px] opacity-50" />
        <svg width="16" height="14" viewBox="0 0 16 14" className="ml-[11px]">
          <path d="M1 2h14v8l-3 2-2-3H6l-2 3-3-2z" fill="#fff" stroke="#aaa" />
        </svg>
        <span className="ml-[2px]">游</span>
      </div>
      <div className="h-[28px] shrink-0 bg-[#f3f3f3] flex items-end pl-[3px] border-b border-[#bbb] whitespace-nowrap">
        <div className="w-[221px] h-[28px] -mb-px bg-white border border-[#c4c4c4] border-b-0 rounded-t-[3px] flex items-center pl-[11px] overflow-hidden shrink-0">
          <TabLogo />
          <span className="ml-[5px] w-[165px] overflow-hidden text-[#333]">专业造价问题答疑平台-广联达服务</span>
          <span className="ml-[3px] text-[#888] text-[14px]">×</span>
        </div>
        <div className="w-[210px] h-[26px] ml-[2px] bg-[#efefef] border border-[#c4c4c4] border-b-0 rounded-t-[3px] flex items-center pl-[10px] overflow-hidden shrink-0">
          <TabLogo />
          <span className="ml-[6px] text-[#555]">请问混凝土墙里暗柱旁边还有根</span>
        </div>
      </div>

      {/* Page */}
      <div className="h-[29px] shrink-0 flex items-start">
        <div className="w-[270px] h-[29px] border-b-2 border-[#1c5c9c] shrink-0" />
        <div className="w-[104px] h-[29px] bg-[#3b7fcb] flex items-center text-white text-[14px] shrink-0">
          <Search size={15} strokeWidth={3} className="ml-[12px]" />
          <span className="ml-[10px]">搜索一下</span>
        </div>
        <div className="ml-[20px] w-[40px] h-[26px] bg-[#f4f4f4] border border-[#ccc] rounded-b-[3px] text-[#2a6ab8] text-[16px] pl-[10px] shrink-0">?</div>
      </div>
      <div className="h-[12px] shrink-0 border-b border-[#888]" />
      <div className="h-[30px] mt-[11px] shrink-0 bg-[#deedfb] border-b border-[#a8c4e0] flex items-center whitespace-nowrap text-[14px] text-[#111]">
        <div className="w-[55px] h-[30px] -mb-px bg-white border-r border-[#a8c4e0] font-bold leading-[28px] text-right pr-[10px] shrink-0">决问题</div>
        <a className="ml-[17px] underline">已解决问题</a>
        <a className="ml-[17px] underline">投票中</a>
        <a className="ml-[16px] underline">官方精品</a>
        <a className="ml-[17px] underline">施工精品</a>
        <a className="ml-[17px] underline">零回复</a>
        <a className="ml-[16px]">高</a>
      </div>
      <div className="h-[48px] shrink-0 border-b border-dotted border-[#aaa]" />
      {questions.map((q, i) => (
        <div key={q.score} className={`h-[34px] shrink-0 flex items-center whitespace-nowrap border-b ${i === 3 ? "border-[#ccc]" : "border-dotted border-[#aaa]"} ${q.pad}`}>
          <span className="text-[14px] text-[#0000c0]">{q.title}</span>
          <span className="ml-[9px]">
            <Coin />
          </span>
          <span className="ml-[5px] text-[#c05a50]">{q.score}</span>
          <span className="ml-[8px] text-[#111]">{q.tag}</span>
        </div>
      ))}
      <div className="h-[36px] shrink-0 flex items-center pl-[52px] text-[#a0a0a0] whitespace-nowrap">
        <span className="text-[#333]">曾</span>
        <span className="ml-[15px]">|</span>
        <span className="ml-[14px]">悬赏分：50分</span>
        <span className="ml-[14px]">|</span>
        <span className="ml-[14px]">回答次数：2次</span>
      </div>
      <div className="h-[20px] shrink-0 pl-[52px] text-[14px] leading-[20px] text-[#111]">种承台钢筋要怎么设置</div>
      <div className="h-[42px] shrink-0" />
      <RebarCad />
    </div>
  );
}

//-- Red annotation arrows drawn over everything
const arrows = [
  [165, 250, 418, 184],
  [505, 185, 130, 415],
  [130, 410, 508, 540],
  [1066, 698, 492, 282],
  [583, 523, 950, 612],
  [752, 519, 1148, 642],
  [740, 713, 1013, 798],
];

function Arrows() {
  return (
    <svg width="1302" height="822" viewBox="0 0 1302 822" className="absolute left-0 top-0 pointer-events-none">
      {arrows.map(([x1, y1, x2, y2]) => {
        const a = Math.atan2(y2 - y1, x2 - x1);
        const l = 20;
        const w = 8;
        const bx = x2 - l * Math.cos(a);
        const by = y2 - l * Math.sin(a);
        const px = -Math.sin(a) * w;
        const py = Math.cos(a) * w;
        return (
          <g key={`${x1}-${y1}`}>
            <line x1={x1} y1={y1} x2={bx} y2={by} stroke="#e41212" strokeWidth="3.5" />
            <polygon points={`${x2},${y2} ${bx + px},${by + py} ${bx - px},${by - py}`} fill="#e41212" />
          </g>
        );
      })}
    </svg>
  );
}

export default function App() {
  return (
    <div className="relative w-[1302px] h-[822px] overflow-hidden bg-[#2f7fdc] font-['Liberation_Mono','Noto_Sans_CJK_SC',monospace]">
      {/* Desktop wallpaper strip */}
      <svg width="1302" height="35" viewBox="0 0 1302 35" className="absolute left-0 top-0">
        <rect width="1302" height="35" fill="#2f7fdc" />
        <path d="M1000 0H1302V35H925L945 20L930 10L975 0z" fill="#0b2018" />
        <path d="M925 35L960 8L985 35zM990 6L1050 28L1010 30zM1050 0L1110 18L1080 0zM1180 4L1240 20L1200 6z" fill="#1c4a30" />
        <path d="M1085 0H1125L1110 10zM1140 0H1170L1160 5z" fill="#1c4fa0" />
        <path d="M700 0L720 5H800L830 0zM840 0L860 5H873V0z" fill="#2a5a60" />
      </svg>
      <BrowserWindow />
      <MainWindow />
      <Dialog />
      <Arrows />
    </div>
  );
}
